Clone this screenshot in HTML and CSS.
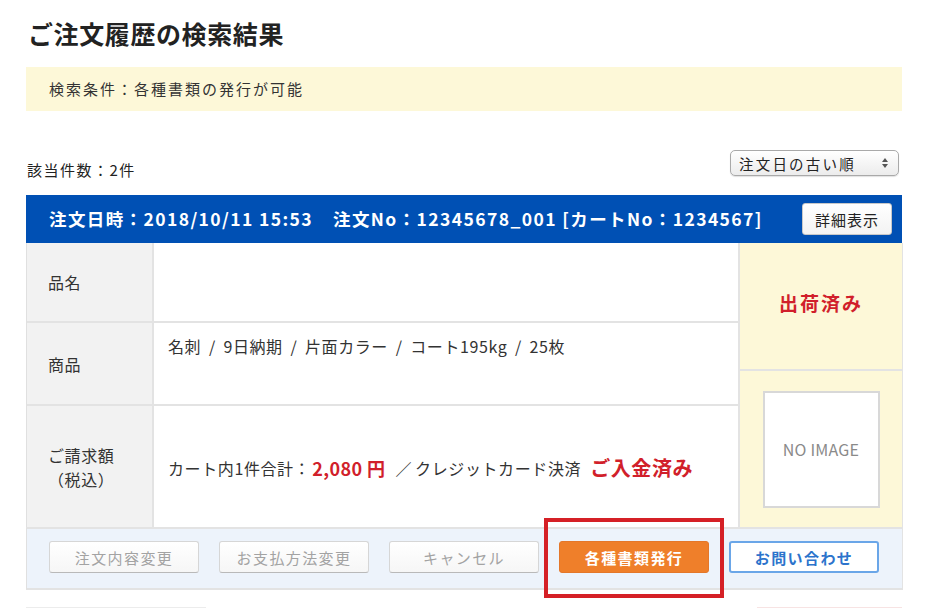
FILE: index.html
```html
<!DOCTYPE html>
<html lang="ja">
<head>
<meta charset="utf-8">
<title>ご注文履歴の検索結果</title>
<link rel="stylesheet" href="styles.css">
</head>
<body>
<div class="page">
  <h1 class="title">ご注文履歴の検索結果</h1>
  <div class="condition">検索条件：各種書類の発行が可能</div>

  <div class="toolbar">
    <div class="count">該当件数：2件</div>
    <div class="select">
      <span>注文日の古い順</span>
      <svg class="arrows" width="8" height="12" viewBox="0 0 8 12"><path d="M4 1 L7 5 H1 Z" fill="#555"/><path d="M4 11 L7 7 H1 Z" fill="#555"/></svg>
    </div>
  </div>

  <div class="order">
    <div class="order-head">
      <div class="order-info">注文日時：2018/10/11 15:53<span class="sp"></span>注文No：12345678_001 [カートNo：1234567]</div>
      <button class="detail-btn">詳細表示</button>
    </div>
    <div class="order-body">
      <div class="rows">
        <div class="row r1">
          <div class="label">品名</div>
          <div class="value"></div>
        </div>
        <div class="row r2">
          <div class="label">商品</div>
          <div class="value top">名刺 / 9日納期 / 片面カラー / コート195kg / 25枚</div>
        </div>
        <div class="row r3">
          <div class="label">ご請求額<br>（税込）</div>
          <div class="value mid">カート内1件合計：<span class="price">2,080 円</span><span class="slash">／</span>クレジットカード決済<span class="paid">ご入金済み</span></div>
        </div>
      </div>
      <div class="side">
        <div class="status">出荷済み</div>
        <div class="thumb-cell"><div class="thumb">NO IMAGE</div></div>
      </div>
    </div>
    <div class="actions">
      <button class="btn off">注文内容変更</button>
      <button class="btn off">お支払方法変更</button>
      <button class="btn off">キャンセル</button>
      <div class="hl-wrap">
        <button class="btn orange">各種書類発行</button>
        <div class="highlight"></div>
      </div>
      <button class="btn blue">お問い合わせ</button>
    </div>
  </div>
  <div class="next">
    <div class="next-left"></div>
    <div class="next-right"></div>
  </div>
</div>
</body>
</html>
```

FILE: styles.css
```css
* { box-sizing: border-box; }
html, body { margin: 0; padding: 0; background: #fff; }
body {
  font-family: "Noto Sans CJK JP", "Noto Sans", sans-serif;
  color: #333;
  min-height: 608px;
}
.page {
  width: 876px;
  margin-left: 26px;
  padding-top: 16px;
}
.title {
  margin: 0;
  font-size: 25px;
  line-height: 34px;
  font-weight: 700;
  color: #222;
  padding-left: 2px;
  letter-spacing: 0.6px;
}
.condition {
  margin-top: 17px;
  height: 44px;
  background: #fdf8d8;
  padding-left: 23px;
  font-size: 15px;
  line-height: 44px;
  letter-spacing: 2px;
  color: #333;
}
.toolbar {
  display: flex;
  justify-content: space-between;
  align-items: flex-start;
  height: 26px;
  margin-top: 39px;
  padding-right: 3px;
}
.count {
  padding-top: 10px;
  font-size: 15px;
  line-height: 20px;
  letter-spacing: 1.5px;
  color: #222;
  padding-left: 1px;
}
.select {
  width: 169px;
  height: 26px;
  border: 1px solid #a9a9a9;
  border-radius: 5px;
  background: linear-gradient(#ffffff, #ececec);
  display: flex;
  align-items: center;
  justify-content: space-between;
  padding: 0 9px 0 8px;
  font-size: 14.5px;
  letter-spacing: 2.2px;
  color: #222;
  box-shadow: 0 1px 1px rgba(0,0,0,0.12);
}
.arrows { display: block; }
.order { margin-top: 19px; }
.order-head {
  height: 48px;
  background: #0050b4;
  display: flex;
  align-items: center;
  justify-content: space-between;
  padding: 0 10px 0 23px;
}
.order-info {
  color: #fff;
  font-size: 17.5px;
  font-weight: 700;
  letter-spacing: 1.4px;
  line-height: 24px;
  white-space: nowrap;
}
.sp { display: inline-block; width: 20px; }
.detail-btn {
  width: 90px;
  height: 32px;
  background: linear-gradient(#fff, #f3f3f3);
  border: 1px solid #c8c8c8;
  border-radius: 3px;
  font-family: inherit;
  font-size: 15px;
  letter-spacing: 1px;
  color: #222;
  padding: 0;
}
.order-body {
  display: flex;
  background: #e3e3e3;
  gap: 2px;
  border-left: 1px solid #e0e0e0;
  box-shadow: 1px 0 0 #e3e3e3;
}
.rows {
  flex: 1;
  display: flex;
  flex-direction: column;
  gap: 2px;
}
.row { display: flex; gap: 2px; }
.r1 { height: 78px; }
.r2 { height: 81px; }
.r3 { height: 121px; }
.label {
  width: 125px;
  background: #f2f2f2;
  display: flex;
  align-items: center;
  padding-left: 21px;
  font-size: 16px;
  line-height: 24px;
  letter-spacing: 0.6px;
  color: #333;
}
.value {
  flex: 1;
  background: #fff;
  padding-left: 14px;
  font-size: 16px;
  color: #333;
  letter-spacing: 0.6px;
}
.value.top { padding-top: 13px; line-height: 20px; word-spacing: 3.5px; }
.value.mid { display: flex; align-items: center; white-space: nowrap; padding-top: 2px; }
.price {
  color: #d11f2b;
  font-weight: 700;
  font-size: 18px;
  letter-spacing: 0.4px;
  margin-left: 2px;
}
.slash { margin: 0 3px 0 10px; }
.paid {
  color: #d11f2b;
  font-weight: 700;
  font-size: 20px;
  letter-spacing: 0.6px;
  margin-left: 9px;
}
.side {
  width: 162px;
  display: flex;
  flex-direction: column;
  gap: 2px;
}
.status {
  height: 126px;
  background: #fdf8d8;
  display: flex;
  align-items: center;
  justify-content: center;
  padding-bottom: 8px;
  color: #d11f2b;
  font-weight: 700;
  font-size: 19px;
  letter-spacing: 2px;
}
.thumb-cell {
  height: 156px;
  background: #fdf8d8;
  display: flex;
  align-items: center;
  justify-content: center;
}
.thumb {
  width: 117px;
  height: 117px;
  background: #fff;
  border: 2px solid #d8d8d8;
  display: flex;
  align-items: center;
  justify-content: center;
  color: #8a8a8a;
  font-size: 16px;
  letter-spacing: 0.2px;
}
.actions {
  display: flex;
  gap: 20px;
  background: #edf3fb;
  border-top: 2px solid #e3e3e3;
  border-left: 1px solid #e0e0e0;
  border-bottom: 2px solid #e3e3e3;
  box-shadow: 1px 0 0 #e3e3e3;
  padding: 12px 0 15px 22px;
}
.btn {
  width: 150px;
  height: 32px;
  border-radius: 3px;
  font-family: inherit;
  font-size: 15px;
  letter-spacing: 1.4px;
  padding: 0;
}
.btn.off {
  background: linear-gradient(#ffffff, #f6f6f6);
  border: 1px solid #d6d6d6;
  border-bottom-color: #b9b9b9;
  color: #a3a3a3;
}
.btn.orange {
  background: #ef7f2a;
  border: 1px solid #e4772a;
  color: #fff;
  font-weight: 700;
  display: block;
}
.btn.blue {
  background: #fff;
  border: 2px solid #6aa6e8;
  color: #2c74cc;
  font-weight: 700;
}
.hl-wrap { position: relative; }
.highlight {
  position: absolute;
  left: -15px;
  right: -15px;
  top: -23px;
  bottom: -25px;
  border: 4px solid #d52026;
  pointer-events: none;
  z-index: 2;
}
.next {
  margin-top: 17px;
  height: 4px;
  display: flex;
  justify-content: space-between;
}
.next-left { width: 180px; border-top: 1px solid #ececec; }
.next-right { width: 145px; border-top: 1px solid #f7e3e3; }
```
